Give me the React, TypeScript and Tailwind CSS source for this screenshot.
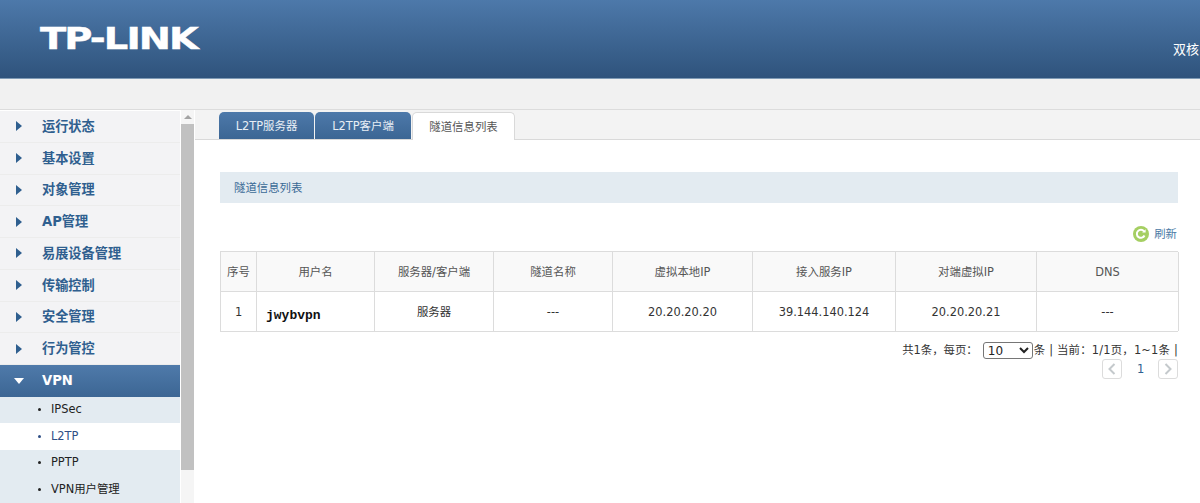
import React from "react";

const font = { fontFamily: '"DejaVu Sans","Noto Sans CJK SC",sans-serif' };

const menu = ["运行状态", "基本设置", "对象管理", "AP管理", "易展设备管理", "传输控制", "安全管理", "行为管控"];
const subs = ["IPSec", "L2TP", "PPTP", "VPN用户管理"];

const cols = [
  { w: "w-[36px]", h: "序号", v: "1" },
  { w: "w-[118px]", h: "用户名", v: "jwybvpn" },
  { w: "w-[119px]", h: "服务器/客户端", v: "服务器" },
  { w: "w-[119px]", h: "隧道名称", v: "---" },
  { w: "w-[140px]", h: "虚拟本地IP", v: "20.20.20.20" },
  { w: "w-[143px]", h: "接入服务IP", v: "39.144.140.124" },
  { w: "w-[141px]", h: "对端虚拟IP", v: "20.20.20.21" },
  { w: "w-[142px]", h: "DNS", v: "---" },
];

function Chevron({ dir }: { dir: "l" | "r" }) {
  return (
    <svg width="8" height="12" viewBox="0 0 8 12" fill="none" stroke="#c4c9cc" strokeWidth="2">
      <path d={dir === "l" ? "M6.5 1 L1.5 6 L6.5 11" : "M1.5 1 L6.5 6 L1.5 11"} />
    </svg>
  );
}

export default function App() {
  return (
    <div className="h-[503px] w-[1200px] overflow-hidden bg-white text-[11.4px]" style={font}>
      <header className="h-[79px] border-b border-[#7f9ab5] bg-gradient-to-b from-[#4d79aa] to-[#2f537c] flex items-start justify-between">
        <div className="ml-[40px] mt-[21px] text-[30px] leading-[36px] font-bold text-white tracking-[-1.5px] origin-left scale-x-[1.28] [-webkit-text-stroke:0.4px_white]">
          TP-LINK
        </div>
        <div className="mt-[41px] text-[13px] leading-[18px] text-white whitespace-nowrap w-[27px] overflow-hidden">双核</div>
      </header>
      <div className="h-[31px] bg-[#f1f1f1] border-b border-[#dcdcdc]" />
      <div className="flex h-[393px]">
        <aside className="w-[195px] flex shrink-0 bg-white">
          <div className="w-[180px] shrink-0 pt-[1px]">
            {menu.map((m) => (
              <div key={m} className="h-[31.75px] bg-[#f3f3f5] border-b border-[#ececec] flex items-center text-[13.2px] font-bold text-[#2f5f8f]">
                <span className="ml-[16px] mr-[20px] w-0 h-0 border-y-[5px] border-y-transparent border-l-[6px] border-l-[#2f5f8f]" />
                <span className="pt-[1px]">{m}</span>
              </div>
            ))}
            <div className="h-[31.5px] bg-gradient-to-b from-[#4f7aaa] to-[#3c6694] flex items-center text-[13.2px] font-bold text-white">
              <span className="ml-[14px] mr-[18px] w-0 h-0 border-x-[5px] border-x-transparent border-t-[6px] border-t-white" />
              <span className="pt-[1px]">VPN</span>
            </div>
            {subs.map((s) => (
              <div key={s} className={`h-[26.5px] flex items-center ${s === "L2TP" ? "bg-white text-[#2f4f85]" : "bg-[#e3ebf1] text-[#222222]"}`}>
                <span className={`ml-[38px] mr-[10px] w-[3px] h-[3px] rounded-full ${s === "L2TP" ? "bg-[#2f4f85]" : "bg-[#222222]"}`} />
                <span>{s}</span>
              </div>
            ))}
          </div>
          <div className="w-[13px] ml-[1px] bg-[#f5f5f5] flex flex-col items-center">
            <div className="h-[14px] flex items-center justify-center">
              <span className="w-0 h-0 border-x-[4px] border-x-transparent border-b-[4px] border-b-[#a3a3a3]" />
            </div>
            <div className="w-full h-[346px] bg-[#c1c1c1]" />
          </div>
        </aside>
        <main className="flex-1 min-w-0 text-[#444444]">
          <div className="h-[30px] bg-[#f3f3f3] border-b border-[#d9d9d9] flex items-end pl-[24px] gap-[1px]">
            <div className="h-[27px] w-[95px] pt-[3px] rounded-t-[5px] bg-gradient-to-b from-[#4d79aa] to-[#3c6694] text-[#e8eef5] flex items-center justify-center">L2TP服务器</div>
            <div className="h-[27px] w-[96px] pt-[3px] rounded-t-[5px] bg-gradient-to-b from-[#4d79aa] to-[#3c6694] text-[#e8eef5] flex items-center justify-center">L2TP客户端</div>
            <div className="h-[28px] w-[103px] pt-[3px] -mb-px rounded-t-[5px] bg-white border border-b-0 border-[#d9d9d9] text-[#555555] flex items-center justify-center">隧道信息列表</div>
          </div>
          <div className="pl-[25px] pr-[22px]">
            <div className="mt-[32px] h-[31px] pt-[2px] bg-[#e3ebf1] flex items-center pl-[14px] text-[#3a6a96]">隧道信息列表</div>
            <div className="mt-[22px] h-[18px] flex items-center justify-end gap-[5px] text-[#4a7aa5]">
              <svg width="16" height="16" viewBox="0 0 16 16" fill="none">
                <circle cx="8" cy="8" r="8" fill="#a5cf62" />
                <path d="M11.5 9.5 A4 4 0 1 1 11 5.3" stroke="#fff" strokeWidth="2" fill="none" />
                <path d="M9.2 6.6 L12.6 6.6 L12.6 3.2 Z" fill="#fff" />
              </svg>
              <span className="mr-[1px] pt-[1px]">刷新</span>
            </div>
            <div className="mt-[8px] flex w-[958px] border border-[#dcdcdc] border-r-0">
              {cols.map((c) => (
                <div key={c.h} className={`${c.w} shrink-0 border-r border-[#dcdcdc] text-center`}>
                  <div className="h-[40px] pt-[2px] bg-[#f9f9f9] border-b border-[#dcdcdc] flex items-center justify-center text-[#555555]">{c.h}</div>
                  <div className="h-[39px] pt-[2px] flex items-center justify-center text-[#333333]">
                    {c.v === "jwybvpn" ? (
                      <span className="w-full pl-[9px] text-left mt-[6px] text-[13px] font-bold text-[#111111] [font-family:'Liberation_Mono',monospace]">{c.v}</span>
                    ) : (
                      c.v
                    )}
                  </div>
                </div>
              ))}
            </div>
            <div className="mt-[9px] flex items-center justify-end h-[18px] text-[#333333] whitespace-nowrap">
              <span className="pt-[2px]">共1条，每页：</span>
              <select className="ml-[5px] w-[50px] h-[17px] border border-[#767676] rounded-[3px] bg-white text-[12px] leading-[15px] text-[#222222]" defaultValue="10">
                <option>10</option>
              </select>
              <span className="pt-[2px] ml-[1px] tracking-[0.2px]">条 | 当前：1/1页，1~1条 |</span>
            </div>
            <div className="flex justify-end items-center text-[#2f6190]">
              <span className="w-[20px] h-[20px] border border-[#dcdcdc] rounded-[3px] flex items-center justify-center"><Chevron dir="l" /></span>
              <span className="w-[36px] text-center pl-[1px] pt-[1px]">1</span>
              <span className="w-[20px] h-[20px] border border-[#dcdcdc] rounded-[3px] flex items-center justify-center"><Chevron dir="r" /></span>
            </div>
          </div>
        </main>
      </div>
    </div>
  );
}
